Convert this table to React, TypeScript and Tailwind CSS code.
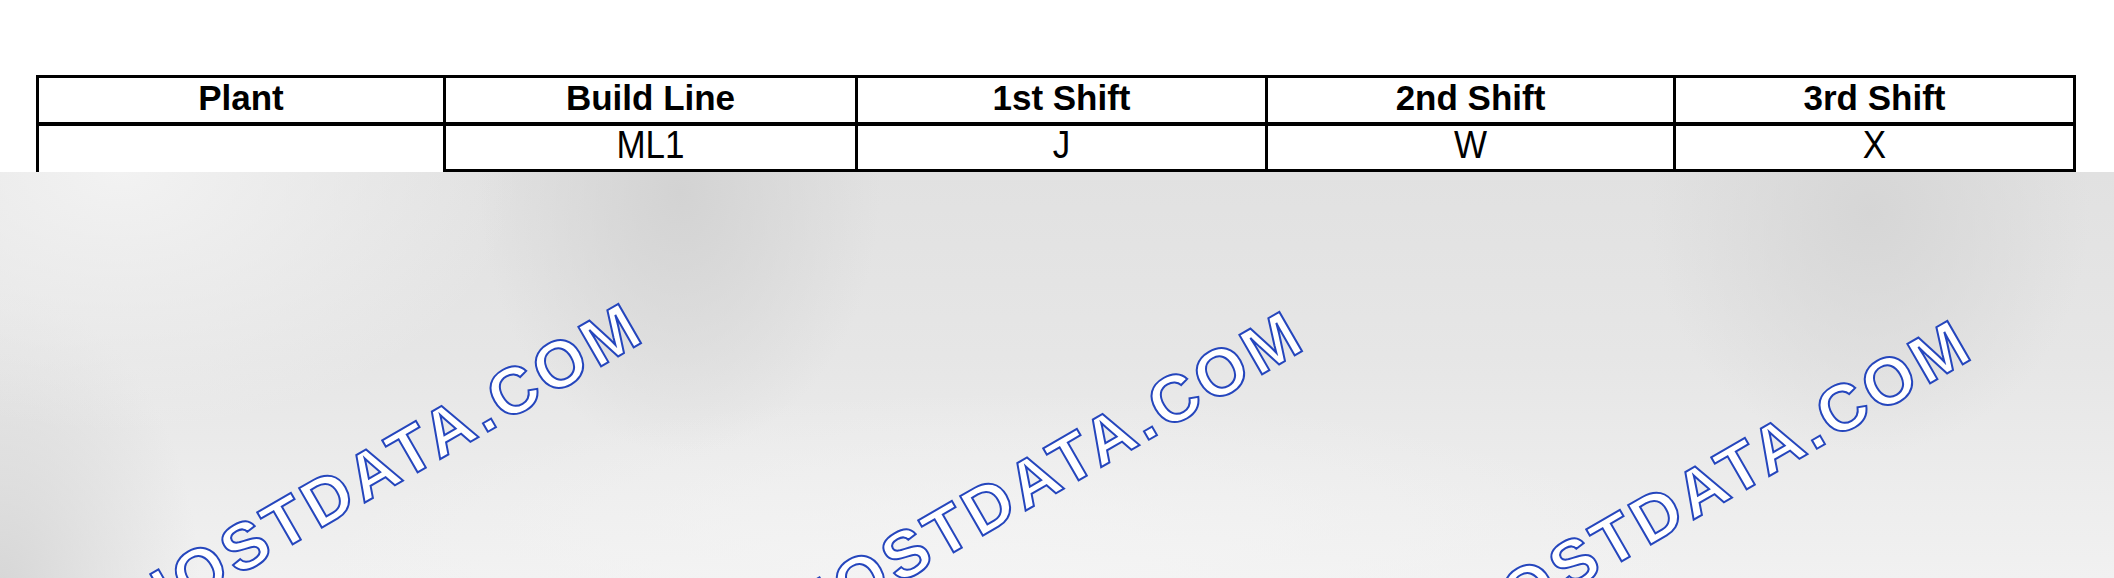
import React from "react";

function Watermark({ pos }: { pos: string }) {
  return (
    <div className={`absolute w-0 h-0 origin-top-left rotate-[-30deg] ${pos}`}>
      <span className="absolute left-[-412px] top-[-51px] text-[66px] leading-none tracking-[4.5px] whitespace-nowrap font-bold text-white [-webkit-text-stroke:2px_#2546bd]">
        HOSTDATA.COM
      </span>
    </div>
  );
}

export default function App() {
  return (
    <div className="w-[2114px] h-[578px] bg-white flex flex-col overflow-hidden font-['Liberation_Sans',Arial,sans-serif] text-black">
      <div className="h-[172px] pt-[75px] pl-[36px] shrink-0">
        <div className="w-[2040px]">
          <div className="flex border-t-[3px] border-b-[4px] border-black text-[35px] font-bold">
            <div className="w-[407px] h-[44px] border-l-[3px] border-black flex justify-center leading-[40px]">Plant</div>
            <div className="w-[412px] h-[44px] border-l-[3px] border-black flex justify-center leading-[40px]">Build Line</div>
            <div className="w-[410px] h-[44px] border-l-[3px] border-black flex justify-center leading-[40px]">1st Shift</div>
            <div className="w-[408px] h-[44px] border-l-[3px] border-black flex justify-center leading-[40px]">2nd Shift</div>
            <div className="w-[403px] h-[44px] border-l-[3px] border-r-[3px] border-black flex justify-center leading-[40px]">3rd Shift</div>
          </div>
          <div className="flex text-[35px]">
            <div className="w-[407px] h-[46px] border-l-[3px] border-black"></div>
            <div className="w-[412px] h-[46px] border-l-[3px] border-b-[3px] border-black flex justify-center items-start pt-[1px]">
              <span className="inline-block leading-[35px] scale-y-110">ML1</span>
            </div>
            <div className="w-[410px] h-[46px] border-l-[3px] border-b-[3px] border-black flex justify-center items-start pt-[1px]">
              <span className="inline-block leading-[35px] scale-y-110">J</span>
            </div>
            <div className="w-[408px] h-[46px] border-l-[3px] border-b-[3px] border-black flex justify-center items-start pt-[1px]">
              <span className="inline-block leading-[35px] scale-y-110">W</span>
            </div>
            <div className="w-[403px] h-[46px] border-l-[3px] border-r-[3px] border-b-[3px] border-black flex justify-center items-start pt-[1px]">
              <span className="inline-block leading-[35px] scale-y-110">X</span>
            </div>
          </div>
        </div>
      </div>
      <div className="relative flex-1 overflow-hidden [background-image:radial-gradient(ellipse_200px_260px_at_680px_20px,#d3d3d3,transparent),radial-gradient(ellipse_220px_240px_at_1870px_40px,#d6d6d6,transparent),radial-gradient(ellipse_400px_260px_at_120px_0px,#f2f2f2,transparent),radial-gradient(ellipse_200px_300px_at_0px_420px,#d6d6d6,transparent),radial-gradient(ellipse_700px_200px_at_1000px_420px,#f4f4f4,transparent),linear-gradient(to_bottom,#e1e1e1,#e6e6e6_45%,#f1f1f1)]">
        <Watermark pos="left-[498px] top-[248px]" />
        <Watermark pos="left-[1159px] top-[256px]" />
        <Watermark pos="left-[1827px] top-[265px]" />
      </div>
    </div>
  );
}
